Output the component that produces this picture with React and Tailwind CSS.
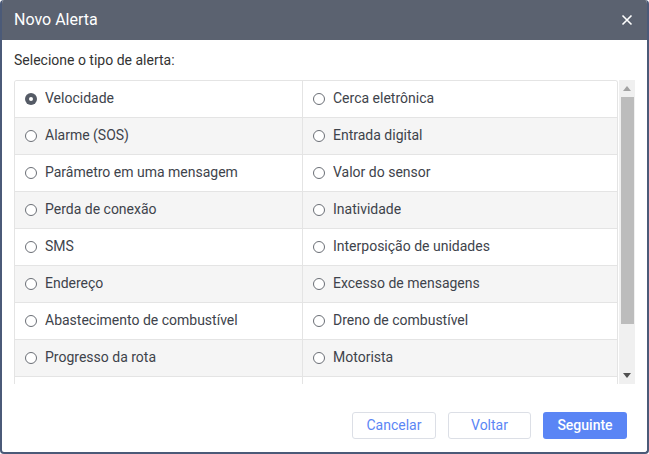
import React, { useState } from 'react';

const tipos = [
    ['Velocidade', 'Cerca eletrônica'],
    ['Alarme (SOS)', 'Entrada digital'],
    ['Parâmetro em uma mensagem', 'Valor do sensor'],
    ['Perda de conexão', 'Inatividade'],
    ['SMS', 'Interposição de unidades'],
    ['Endereço', 'Excesso de mensagens'],
    ['Abastecimento de combustível', 'Dreno de combustível'],
    ['Progresso da rota', 'Motorista'],
];

function Radio({ checked }) {
    if (checked) {
        return (
            <span className="w-[12px] h-[12px] rounded-full bg-[#555b66] flex items-center justify-center shrink-0">
                <span className="w-[4px] h-[4px] rounded-full bg-white" />
            </span>
        );
    }
    return <span className="w-[12px] h-[12px] rounded-full border border-[#6b6f76] bg-white shrink-0" />;
}

function Cell({ label, checked, onClick, last }) {
    return (
        <div
            onClick={onClick}
            className={`flex items-center gap-[8px] pl-[10px] pb-[1px] h-full cursor-pointer ${last ? '' : 'border-r border-[#e4e4e4]'}`}
        >
            <Radio checked={checked} />
            <span className="text-[14px] text-[#3e434b] truncate">{label}</span>
        </div>
    );
}

export default function App() {
    const [selected, setSelected] = useState('Velocidade');

    return (
        <div className="w-[649px] h-[454px] bg-white border-2 border-t-0 border-[#4b5a78] rounded-[4px] overflow-hidden flex flex-col" style={{ fontFamily: 'Roboto, "Liberation Sans", sans-serif' }}>
            {/* cabeçalho */}
            <div className="h-[40px] bg-[#5b6270] flex items-center justify-between pl-[12px] pr-[12px] shrink-0">
                <span className="text-white text-[16px]">Novo Alerta</span>
                <svg width="12" height="12" viewBox="0 0 12 12" className="mr-[2px]">
                    <path d="M1.5 1.5 L10.5 10.5 M10.5 1.5 L1.5 10.5" stroke="white" strokeWidth="1.6" />
                </svg>
            </div>

            {/* corpo */}
            <div className="flex-1 flex flex-col pl-[12px] pr-[12px]">
                <div className="text-[14px] text-[#333] mt-[11px] h-[19px] leading-[19px]">Selecione o tipo de alerta:</div>

                <div className="mt-[10px] flex h-[304px]">
                    <div className="w-[604px] shrink-0 h-full overflow-hidden border-l border-t border-r border-[#e4e4e4] rounded-tl-[3px] rounded-tr-[3px]">
                        {tipos.map(([a, b], i) => (
                            <div
                                key={a}
                                className={`grid grid-cols-[288px_1fr] h-[37px] border-b border-[#e4e4e4] ${i % 2 === 1 ? 'bg-[#f5f5f5]' : 'bg-white'}`}
                            >
                                <Cell label={a} checked={selected === a} onClick={() => setSelected(a)} />
                                <Cell label={b} checked={selected === b} onClick={() => setSelected(b)} last />
                            </div>
                        ))}
                        <div className="grid grid-cols-[288px_1fr] h-[37px] bg-white">
                            <div className="border-r border-[#e4e4e4]" />
                            <div />
                        </div>
                    </div>

                    {/* barra de rolagem */}
                    <div className="w-[16px] shrink-0 h-full bg-[#f0f0f0] ml-[1px] flex flex-col items-center">
                        <div className="h-[17px] flex items-center justify-center">
                            <svg width="8" height="5" viewBox="0 0 8 5"><path d="M0 5 L4 0 L8 5 Z" fill="#a3a3a3" /></svg>
                        </div>
                        <div className="w-[13px] h-[227px] bg-[#bcbcbc]" />
                        <div className="flex-1" />
                        <div className="h-[17px] flex items-center justify-center">
                            <svg width="8" height="5" viewBox="0 0 8 5"><path d="M0 0 L8 0 L4 5 Z" fill="#505050" /></svg>
                        </div>
                    </div>
                </div>

                {/* botões */}
                <div className="mt-[28px] flex justify-end gap-[12px] pr-[8px]">
                    <button className="w-[84px] h-[27px] rounded-[3px] border border-[#dcdfe6] bg-white text-[14px] text-[#5b86f5]">Cancelar</button>
                    <button className="w-[83px] h-[27px] rounded-[3px] border border-[#dcdfe6] bg-white text-[14px] text-[#5b86f5]">Voltar</button>
                    <button className="w-[84px] h-[27px] rounded-[3px] bg-[#5a85f5] text-[14px] font-medium text-white">Seguinte</button>
                </div>
            </div>
        </div>
    );
}
